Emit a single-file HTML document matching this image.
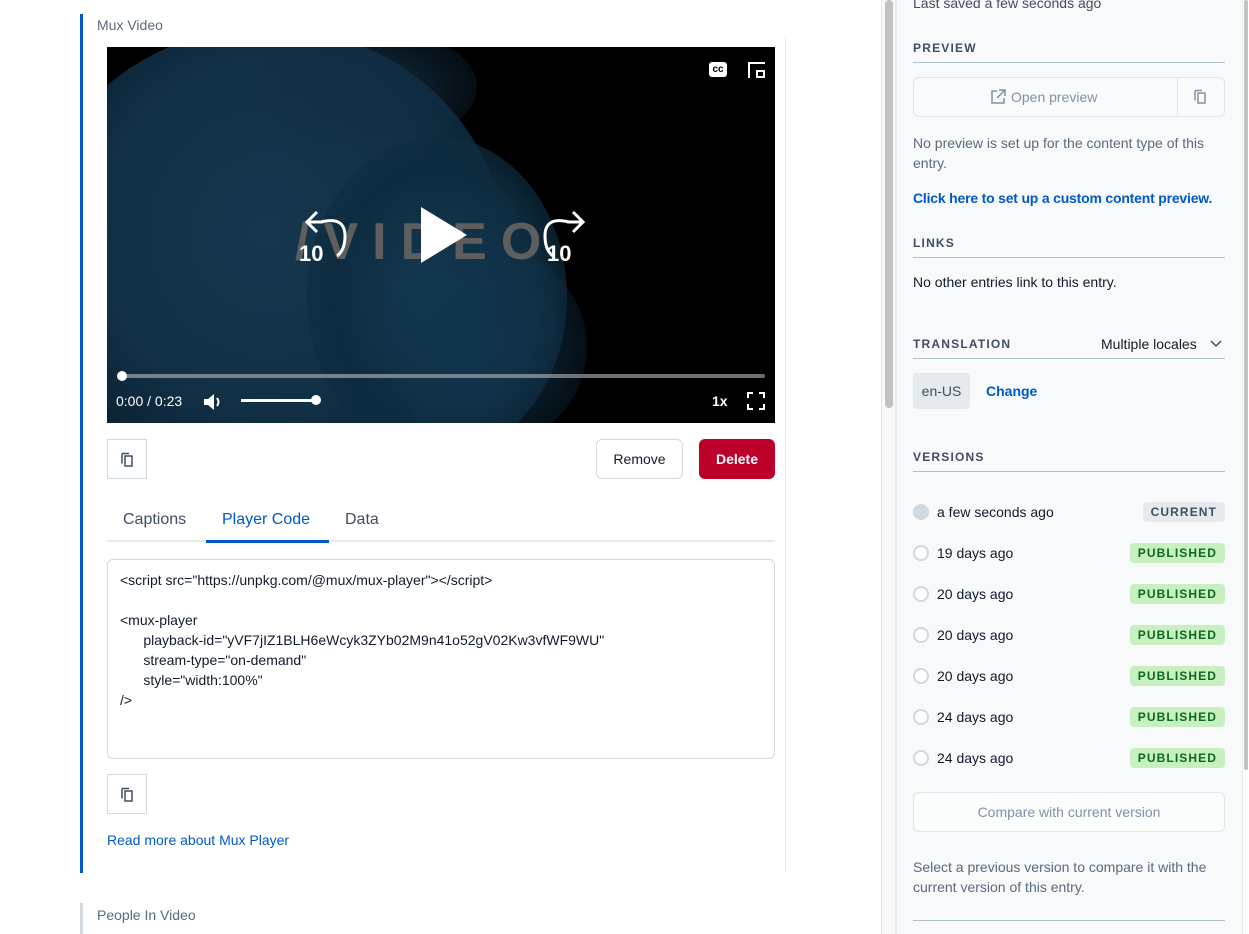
<!DOCTYPE html>
<html><head><meta charset="utf-8"><style>
*{box-sizing:border-box;margin:0;padding:0}
body{width:1249px;height:934px;overflow:hidden;background:#fff;font-family:"Liberation Sans",sans-serif;position:relative;color:#111b2b}
.a{position:absolute}
.lbl{font-size:14px;color:#5a6a7d}
.cp{width:40px;height:40px;border:1px solid #cfd9e0;background:#fff}
.cp svg{position:absolute;left:11px;top:11px}
.sb{font-size:14px}
.h{font-size:12px;letter-spacing:1.2px;color:#414d63;font-weight:bold;border-bottom:1px solid #aec1cc;width:312px;padding-bottom:7px}
.ver{left:913px;width:312px;height:20px;font-size:14px}
.ver .c{position:absolute;left:0;top:2px;width:16px;height:16px;border-radius:50%;border:2px solid #cfd9e0;background:#fff}
.ver .t{position:absolute;left:24px;top:2px;color:#111b2b}
.ver .b{position:absolute;right:0;top:0;height:20px;padding:0 8px;line-height:20px;font-size:12px;font-weight:bold;letter-spacing:1.1px;border-radius:4px;background:#c8efc0;color:#0a6a1c}
</style></head><body>
<div class="a" style="left:80px;top:14px;width:3px;height:859px;background:#0059c8"></div>
<div class="a lbl" style="left:97px;top:17px">Mux Video</div>
<div class="a" style="left:785px;top:37px;width:1px;height:836px;background:#e5ebed"></div>
<div class="a" style="left:107px;top:47px;width:668px;height:376px;background:#000;overflow:hidden">
 <div class="a" style="left:-80px;top:-20px;width:480px;height:460px;border-radius:50%;background:radial-gradient(ellipse at 50% 45%,#15374e 0%,#112f45 50%,#0b2233 72%,rgba(0,0,0,0) 100%)"></div>
 <div class="a" style="left:200px;top:90px;width:260px;height:320px;border-radius:50%;background:radial-gradient(ellipse,#143a54 0%,#0e2c40 55%,rgba(0,0,0,0) 100%)"></div>
 <div class="a" style="left:280px;top:200px;width:200px;height:200px;border-radius:50%;background:radial-gradient(ellipse,#10324a 0%,rgba(0,0,0,0) 100%)"></div>
 <div class="a" style="left:150px;top:-20px;width:220px;height:120px;border-radius:50%;background:radial-gradient(ellipse,#112d42 0%,rgba(0,0,0,0) 100%)"></div>
 <div class="a" style="left:188px;top:165px;font-size:52px;font-weight:bold;letter-spacing:14px;color:#5e5e5e">/VIDEO</div>
 <svg class="a" style="left:190px;top:155px" width="300" height="70" viewBox="0 0 300 70">
  <path d="M124 5 L170 33 L124 61Z" fill="#fff"/>
  <path d="M24 20 Q48 14 48 34 Q48 48 40 54" stroke="#fff" stroke-width="3" fill="none"/>
  <path d="M26 20 L10 20 M20 10 L10 20 L20 30" stroke="#fff" stroke-width="3" fill="none"/>
  <path d="M272 20 Q248 14 248 34 Q248 48 256 54" stroke="#fff" stroke-width="3" fill="none"/>
  <path d="M270 20 L286 20 M276 10 L286 20 L276 30" stroke="#fff" stroke-width="3" fill="none"/>
  <text x="2" y="59" font-family="Liberation Sans" font-weight="bold" font-size="22" fill="#fff">10</text>
  <text x="250" y="59" font-family="Liberation Sans" font-weight="bold" font-size="22" fill="#fff">10</text>
 </svg>
 <div class="a" style="left:602px;top:15px;width:18px;height:15px;background:#fff;border-radius:3px;font-size:10px;font-weight:bold;color:#000;text-align:center;line-height:15px">cc</div>
 <div class="a" style="left:641px;top:15px;width:17px;height:16px;border:2px solid #fff;border-right:none;border-bottom:none"></div>
 <div class="a" style="left:649px;top:23px;width:9px;height:8px;border:2px solid #fff"></div>
 <div class="a" style="left:12px;top:327px;width:646px;height:4px;background:rgba(200,200,200,.55);border-radius:2px"></div>
 <div class="a" style="left:10px;top:324px;width:10px;height:10px;background:#fff;border-radius:50%"></div>
 <div class="a" style="left:9px;top:346px;color:#fff;font-size:14px">0:00 / 0:23</div>
 <svg class="a" style="left:96px;top:346px" width="20" height="18"><path d="M1 6h4l6-5v16l-6-5H1z" fill="#fff"/><path d="M14 5q3 4 0 8" stroke="#fff" stroke-width="2" fill="none"/></svg>
 <div class="a" style="left:134px;top:352px;width:75px;height:3px;background:#fff"></div>
 <div class="a" style="left:204px;top:348px;width:10px;height:10px;background:#fff;border-radius:50%"></div>
 <div class="a" style="left:605px;top:346px;color:#fff;font-size:14px;font-weight:bold">1x</div>
 <svg class="a" style="left:640px;top:345px" width="18" height="18"><path d="M1 6V1h5M12 1h5v5M17 12v5h-5M6 17H1v-5" stroke="#fff" stroke-width="2" fill="none"/></svg>
</div>
<div class="a cp" style="left:107px;top:439px"><svg width="18" height="18" viewBox="0 0 18 18"><path d="M3 2.5h7M3 2.5v10" stroke="#414d63" stroke-width="1.5" fill="none"/><rect x="6" y="5" width="7" height="10" stroke="#414d63" stroke-width="1.5" fill="none"/></svg></div>
<div class="a" style="left:596px;top:439px;width:87px;height:40px;border:1px solid #cfd9e0;border-radius:6px;font-size:14px;text-align:center;line-height:38px">Remove</div>
<div class="a" style="left:699px;top:439px;width:76px;height:40px;background:#bd002a;border-radius:6px;font-size:14px;color:#fff;font-weight:bold;text-align:center;line-height:40px">Delete</div>
<div class="a" style="left:107px;top:540px;width:668px;height:2px;background:#e5ebed"></div>
<div class="a" style="left:206px;top:540px;width:123px;height:3px;background:#0059c8"></div>
<div class="a" style="left:123px;top:511px;font-size:16px;color:#414d63">Captions</div>
<div class="a" style="left:222px;top:511px;font-size:16px;color:#0059c8">Player Code</div>
<div class="a" style="left:345px;top:511px;font-size:16px;color:#414d63">Data</div>
<div class="a" style="left:107px;top:559px;width:668px;height:200px;border:1px solid #cfd9e0;border-radius:6px;font-size:14px;line-height:20px;padding:10px 12px;white-space:pre;color:#111b2b">&lt;script src="https://unpkg.com/@mux/mux-player"&gt;&lt;/script&gt;

&lt;mux-player
      playback-id="yVF7jIZ1BLH6eWcyk3ZYb02M9n41o52gV02Kw3vfWF9WU"
      stream-type="on-demand"
      style="width:100%"
/&gt;</div>
<div class="a cp" style="left:107px;top:774px"><svg width="18" height="18" viewBox="0 0 18 18"><path d="M3 2.5h7M3 2.5v10" stroke="#414d63" stroke-width="1.5" fill="none"/><rect x="6" y="5" width="7" height="10" stroke="#414d63" stroke-width="1.5" fill="none"/></svg></div>
<div class="a" style="left:107px;top:832px;font-size:14px;color:#0059c8">Read more about Mux Player</div>
<div class="a" style="left:80px;top:903px;width:3px;height:31px;background:#cfd9e0"></div>
<div class="a lbl" style="left:97px;top:907px">People In Video</div>
<div class="a" style="left:881px;top:0;width:1px;height:934px;background:#e3e3e3"></div>
<div class="a" style="left:882px;top:0;width:14px;height:934px;background:#f8f8f8"></div>
<div class="a" style="left:885px;top:0;width:8px;height:408px;background:#c1c1c1;border-radius:4px"></div>
<div class="a" style="left:895px;top:0;width:2px;height:934px;background:#e5ebed"></div>
<div class="a" style="left:897px;top:0;width:345px;height:934px;background:#f7f9fa"></div>
<div class="a" style="left:1242px;top:0;width:1px;height:934px;background:#e5ebed"></div>
<div class="a" style="left:1244px;top:0;width:4px;height:770px;background:#c1c1c1;border-radius:2px"></div>
<div class="a sb" style="left:913px;top:-5px;color:#414d63">Last saved a few seconds ago</div>
<div class="a h" style="left:913px;top:41px">PREVIEW</div>
<div class="a" style="left:913px;top:77px;width:312px;height:40px;border:1px solid #dfe5ea;border-radius:6px;background:#f9fafb"></div>
<div class="a" style="left:1177px;top:78px;width:1px;height:38px;background:#dfe5ea"></div>
<svg class="a" style="left:990px;top:89px" width="16" height="16"><path d="M7 2H2v12h12V9M9 1h6v6M15 1L7 9" stroke="#8091a5" stroke-width="1.5" fill="none"/></svg>
<div class="a sb" style="left:1011px;top:89px;color:#8091a5">Open preview</div>
<svg class="a" style="left:1192px;top:88px" width="18" height="18" viewBox="0 0 18 18"><path d="M3 2.5h7M3 2.5v10" stroke="#8091a5" stroke-width="1.5" fill="none"/><rect x="6" y="5" width="7" height="10" stroke="#8091a5" stroke-width="1.5" fill="none"/></svg>
<div class="a sb" style="left:913px;top:133px;width:312px;line-height:20px;color:#5a6a7d">No preview is set up for the content type of this entry.</div>
<div class="a sb" style="left:913px;top:190px;color:#0059c8;font-weight:bold;letter-spacing:-0.2px">Click here to set up a custom content preview.</div>
<div class="a h" style="left:913px;top:236px">LINKS</div>
<div class="a sb" style="left:913px;top:274px">No other entries link to this entry.</div>
<div class="a h" style="left:913px;top:337px">TRANSLATION</div>
<div class="a sb" style="left:1101px;top:336px">Multiple locales</div>
<svg class="a" style="left:1210px;top:340px" width="12" height="8"><path d="M1 1l5 5 5-5" stroke="#414d63" stroke-width="1.5" fill="none"/></svg>
<div class="a" style="left:913px;top:373px;width:57px;height:36px;background:#e5ebed;border-radius:4px;font-size:14px;text-align:center;line-height:36px;color:#414d63">en-US</div>
<div class="a sb" style="left:986px;top:383px;color:#0059c8;font-weight:bold">Change</div>
<div class="a h" style="left:913px;top:450px">VERSIONS</div>
<div class="a ver" style="top:502px"><div class="c" style="background:#cfd9e0;border-color:#cfd9e0"></div><div class="t">a few seconds ago</div><div class="b" style="background:#e5ebed;color:#414d63">CURRENT</div></div>
<div class="a ver" style="top:543px"><div class="c"></div><div class="t">19 days ago</div><div class="b">PUBLISHED</div></div>
<div class="a ver" style="top:584px"><div class="c"></div><div class="t">20 days ago</div><div class="b">PUBLISHED</div></div>
<div class="a ver" style="top:625px"><div class="c"></div><div class="t">20 days ago</div><div class="b">PUBLISHED</div></div>
<div class="a ver" style="top:666px"><div class="c"></div><div class="t">20 days ago</div><div class="b">PUBLISHED</div></div>
<div class="a ver" style="top:707px"><div class="c"></div><div class="t">24 days ago</div><div class="b">PUBLISHED</div></div>
<div class="a ver" style="top:748px"><div class="c"></div><div class="t">24 days ago</div><div class="b">PUBLISHED</div></div>
<div class="a" style="left:913px;top:792px;width:312px;height:40px;border:1px solid #dfe5ea;border-radius:6px;background:#fbfcfc;font-size:14px;color:#8091a5;text-align:center;line-height:38px">Compare with current version</div>
<div class="a sb" style="left:913px;top:857px;width:312px;line-height:20px;color:#5a6a7d">Select a previous version to compare it with the current version of this entry.</div>
<div class="a" style="left:913px;top:920px;width:312px;height:1px;background:#aec1cc"></div>
</body></html>
